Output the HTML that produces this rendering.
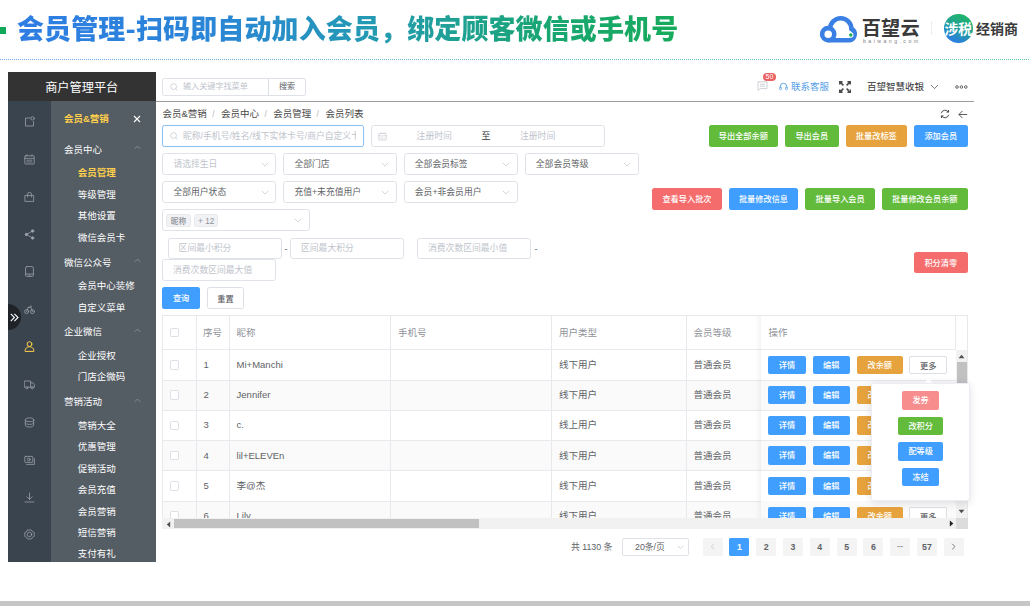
<!DOCTYPE html>
<html lang="zh-CN"><head><meta charset="utf-8"><title>会员管理</title>
<style>
html,body{margin:0;padding:0;}
body{width:1030px;height:606px;position:relative;overflow:hidden;background:#fff;font-family:"Liberation Sans","Noto Sans CJK SC",sans-serif;}
body div,body svg{position:absolute;}
.t{white-space:nowrap;}
.b{white-space:nowrap;text-align:center;overflow:hidden;font-weight:500;}
.inp{box-sizing:border-box;border:0.7px solid #dfe2e8;border-radius:2.7px;background:#fff;}
</style></head><body>

<div style="left:0.0px;top:27.0px;width:6.0px;height:7.4px;background:#12a85a;"></div>
<div class="t" style="left:17px;top:8px;line-height:40px;font-size:27px;font-weight:900;letter-spacing:0.12px;background:linear-gradient(90deg,#2e7de3 0%,#2b86d6 30%,#239bb0 55%,#19a672 80%,#17ab5c 100%);-webkit-background-clip:text;background-clip:text;color:transparent;font-family:'Noto Sans CJK SC',sans-serif;">会员管理-扫码即自动加入会员，绑定顾客微信或手机号</div>
<div style="left:0;top:58.8px;width:1030px;height:1px;opacity:.8;background:linear-gradient(90deg,#4a8fe0,#3fa6b8 55%,#35b880);-webkit-mask:repeating-linear-gradient(90deg,#000 0 1px,transparent 1px 2px);mask:repeating-linear-gradient(90deg,#000 0 1px,transparent 1px 2px);"></div>
<svg style="left:812.0px;top:8.0px;" width="50" height="40" viewBox="0 0 50 40" fill="none"><path d="M16.2 32.25 H37.6 A6.05 6.05 0 0 0 39.4 20.9 A10.65 10.65 0 0 0 18.1 20.9" stroke="#3a7fe4" stroke-width="4.6" stroke-linecap="round" fill="none"/><circle cx="16.2" cy="26.2" r="6.05" stroke="#3a7fe4" stroke-width="4.6" fill="#fff"/><circle cx="38.8" cy="27" r="2.7" fill="#fff"/><circle cx="38.8" cy="27" r="1.7" fill="#1aad5c"/></svg>
<div class="t" style="left:861.7px;top:15.4px;line-height:24px;font-size:19.2px;color:#3a3a3a;font-weight:700;font-family:'Noto Sans CJK SC',sans-serif;letter-spacing:0.2px;">百望云</div>
<div class="t" style="left:863.0px;top:37.1px;line-height:8px;font-size:5.2px;color:#808080;font-weight:400;letter-spacing:2.45px;">baiwang.com</div>
<div style="left:931.0px;top:21.0px;width:0.8px;height:14.0px;background:#ededed;"></div>
<div style="left:943.7px;top:14px;width:29px;height:29px;border-radius:50%;background:linear-gradient(205deg,#1fb568 12%,#22a294 45%,#2a7fe0 85%);"></div>
<div class="t" style="left:941.7px;width:33.0px;text-align:center;top:18.3px;line-height:20px;font-size:13.8px;color:#fff;font-weight:700;font-family:'Noto Sans CJK SC',sans-serif;letter-spacing:-0.2px;">涉税</div>
<div class="t" style="left:976.0px;top:18.3px;line-height:20px;font-size:14px;color:#3a3a3a;font-weight:700;font-family:'Noto Sans CJK SC',sans-serif;">经销商</div>
<div style="left:8.0px;top:72.0px;width:147.5px;height:29.4px;background:#333;"></div>
<div class="t" style="left:8.0px;width:147.5px;text-align:center;top:77.8px;line-height:20px;font-size:12.2px;color:#fff;font-weight:400;">商户管理平台</div>
<div style="left:8.0px;top:101.4px;width:43.0px;height:460.2px;background:#3a444e;"></div>
<div style="left:51.0px;top:101.4px;width:104.5px;height:460.2px;background:#545c64;"></div>
<div class="t" style="left:64.0px;top:109.2px;line-height:20px;font-size:9.5px;color:#ffd04b;font-weight:700;">会员&amp;营销</div>
<svg style="left:133.0px;top:115.4px;" width="8" height="8" viewBox="0 0 8 8" fill="none"><path d="M1 1 L7 7 M7 1 L1 7" stroke="#fff" stroke-width="1.1"/></svg>
<div class="t" style="left:64.0px;top:139.8px;line-height:20px;font-size:9.5px;color:#fff;font-weight:400;">会员中心</div>
<svg style="left:134.2px;top:145.4px;" width="7" height="5" viewBox="0 0 7 5" fill="none"><path d="M0.6 4 L3.5 1 L6.4 4" stroke="#8b939b" stroke-width="0.8"/></svg>
<div class="t" style="left:64.0px;top:252.6px;line-height:20px;font-size:9.5px;color:#fff;font-weight:400;">微信公众号</div>
<svg style="left:134.2px;top:258.2px;" width="7" height="5" viewBox="0 0 7 5" fill="none"><path d="M0.6 4 L3.5 1 L6.4 4" stroke="#8b939b" stroke-width="0.8"/></svg>
<div class="t" style="left:64.0px;top:322.2px;line-height:20px;font-size:9.5px;color:#fff;font-weight:400;">企业微信</div>
<svg style="left:134.2px;top:327.8px;" width="7" height="5" viewBox="0 0 7 5" fill="none"><path d="M0.6 4 L3.5 1 L6.4 4" stroke="#8b939b" stroke-width="0.8"/></svg>
<div class="t" style="left:64.0px;top:392.2px;line-height:20px;font-size:9.5px;color:#fff;font-weight:400;">营销活动</div>
<svg style="left:134.2px;top:397.8px;" width="7" height="5" viewBox="0 0 7 5" fill="none"><path d="M0.6 4 L3.5 1 L6.4 4" stroke="#8b939b" stroke-width="0.8"/></svg>
<div class="t" style="left:77.8px;top:163.4px;line-height:20px;font-size:9.5px;color:#ffd04b;font-weight:700;">会员管理</div>
<div class="t" style="left:77.8px;top:184.6px;line-height:20px;font-size:9.5px;color:#fff;font-weight:400;">等级管理</div>
<div class="t" style="left:77.8px;top:206.0px;line-height:20px;font-size:9.5px;color:#fff;font-weight:400;">其他设置</div>
<div class="t" style="left:77.8px;top:227.8px;line-height:20px;font-size:9.5px;color:#fff;font-weight:400;">微信会员卡</div>
<div class="t" style="left:77.8px;top:275.8px;line-height:20px;font-size:9.5px;color:#fff;font-weight:400;">会员中心装修</div>
<div class="t" style="left:77.8px;top:297.6px;line-height:20px;font-size:9.5px;color:#fff;font-weight:400;">自定义菜单</div>
<div class="t" style="left:77.8px;top:345.8px;line-height:20px;font-size:9.5px;color:#fff;font-weight:400;">企业授权</div>
<div class="t" style="left:77.8px;top:367.2px;line-height:20px;font-size:9.5px;color:#fff;font-weight:400;">门店企微码</div>
<div class="t" style="left:77.8px;top:415.6px;line-height:20px;font-size:9.5px;color:#fff;font-weight:400;">营销大全</div>
<div class="t" style="left:77.8px;top:437.2px;line-height:20px;font-size:9.5px;color:#fff;font-weight:400;">优惠管理</div>
<div class="t" style="left:77.8px;top:458.6px;line-height:20px;font-size:9.5px;color:#fff;font-weight:400;">促销活动</div>
<div class="t" style="left:77.8px;top:480.2px;line-height:20px;font-size:9.5px;color:#fff;font-weight:400;">会员充值</div>
<div class="t" style="left:77.8px;top:501.6px;line-height:20px;font-size:9.5px;color:#fff;font-weight:400;">会员营销</div>
<div class="t" style="left:77.8px;top:523.0px;line-height:20px;font-size:9.5px;color:#fff;font-weight:400;">短信营销</div>
<div class="t" style="left:77.8px;top:544.4px;line-height:20px;font-size:9.5px;color:#fff;font-weight:400;">支付有礼</div>
<svg style="left:24.1px;top:115.5px;" width="11" height="11" viewBox="0 0 11 11" fill="none"><g stroke="#9aa1a9" stroke-width="0.8" fill="none" stroke-linecap="round" stroke-linejoin="round"><path d="M6 2 H1.5 V10 H9.5 V5.6"/><circle cx="8.6" cy="2.4" r="1.7"/></g></svg>
<svg style="left:24.1px;top:153.5px;" width="11" height="11" viewBox="0 0 11 11" fill="none"><g stroke="#9aa1a9" stroke-width="0.8" fill="none" stroke-linecap="round" stroke-linejoin="round"><rect x="0.8" y="1.8" width="9.4" height="8.2" rx="0.8"/><path d="M0.8 4.4 H10.2 M3 0.8 V2.4 M8 0.8 V2.4 M2.8 6.2 H8.2 M2.8 8 H8.2" stroke-dasharray="1.1 0.9"/></g></svg>
<svg style="left:24.1px;top:191.5px;" width="11" height="11" viewBox="0 0 11 11" fill="none"><g stroke="#9aa1a9" stroke-width="0.8" fill="none" stroke-linecap="round" stroke-linejoin="round"><path d="M1.3 3.4 H9.7 V9.4 H1.3 Z M3.6 5 V2.2 a1.9 1.9 0 0 1 3.8 0 V5"/></g></svg>
<svg style="left:24.1px;top:228.9px;" width="11" height="11" viewBox="0 0 11 11" fill="none"><g stroke="#9aa1a9" stroke-width="0.8" fill="none" stroke-linecap="round" stroke-linejoin="round"><circle cx="8.6" cy="2" r="1.2" fill="#a7adb5"/><circle cx="2.4" cy="5.5" r="1.2" fill="#a7adb5"/><circle cx="8.6" cy="9" r="1.2" fill="#a7adb5"/><path d="M2.4 5.5 L8.6 2 M2.4 5.5 L8.6 9"/></g></svg>
<svg style="left:24.1px;top:266.1px;" width="11" height="11" viewBox="0 0 11 11" fill="none"><g stroke="#9aa1a9" stroke-width="0.8" fill="none" stroke-linecap="round" stroke-linejoin="round"><rect x="1.6" y="0.6" width="7.8" height="9.8" rx="1.2"/><path d="M1.6 8 H9.4"/><path d="M4.8 9.2 H6.2"/></g></svg>
<svg style="left:24.1px;top:304.1px;" width="11" height="11" viewBox="0 0 11 11" fill="none"><g stroke="#9aa1a9" stroke-width="0.8" fill="none" stroke-linecap="round" stroke-linejoin="round"><circle cx="2.6" cy="7.6" r="2"/><circle cx="8.4" cy="7.6" r="2"/><path d="M2.6 7.6 L4.4 3.4 H7 L8.4 7.6 M4 3.4 H5 M6.2 2.2 H7.6" /></g></svg>
<svg style="left:24.1px;top:341.1px;" width="11" height="11" viewBox="0 0 11 11" fill="none"><g stroke="#ffd04b" stroke-width="1.0" fill="none" stroke-linecap="round" stroke-linejoin="round"><circle cx="5.5" cy="3.1" r="2.4"/><path d="M1.1 10 V9.6 a4.4 3.9 0 0 1 8.8 0 V10 Z"/></g></svg>
<svg style="left:24.1px;top:378.9px;" width="11" height="11" viewBox="0 0 11 11" fill="none"><g stroke="#9aa1a9" stroke-width="0.8" fill="none" stroke-linecap="round" stroke-linejoin="round"><path d="M0.7 2 H6.6 V8.2 H0.7 Z M6.6 3.8 H9 L10.4 5.8 V8.2 H6.6"/><circle cx="2.8" cy="8.8" r="1.1" fill="#3a444e"/><circle cx="8.2" cy="8.8" r="1.1" fill="#3a444e"/></g></svg>
<svg style="left:24.1px;top:416.5px;" width="11" height="11" viewBox="0 0 11 11" fill="none"><g stroke="#9aa1a9" stroke-width="0.8" fill="none" stroke-linecap="round" stroke-linejoin="round"><ellipse cx="5.5" cy="2.8" rx="4.2" ry="1.9"/><path d="M1.3 2.8 V8.2 a4.2 1.9 0 0 0 8.4 0 V2.8 M1.3 5.5 a4.2 1.9 0 0 0 8.4 0"/></g></svg>
<svg style="left:24.1px;top:454.5px;" width="11" height="11" viewBox="0 0 11 11" fill="none"><g stroke="#9aa1a9" stroke-width="0.8" fill="none" stroke-linecap="round" stroke-linejoin="round"><rect x="0.8" y="1.4" width="8" height="6" rx="0.6"/><circle cx="4.8" cy="4.4" r="1.4"/><path d="M2.6 9.4 H10.4 V3.6"/></g></svg>
<svg style="left:24.1px;top:491.5px;" width="11" height="11" viewBox="0 0 11 11" fill="none"><g stroke="#9aa1a9" stroke-width="0.8" fill="none" stroke-linecap="round" stroke-linejoin="round"><path d="M5.5 1 V7.4 M2.8 4.8 L5.5 7.4 L8.2 4.8 M1 10 H10"/></g></svg>
<svg style="left:24.1px;top:529.1px;" width="11" height="11" viewBox="0 0 11 11" fill="none"><g stroke="#9aa1a9" stroke-width="0.8" fill="none" stroke-linecap="round" stroke-linejoin="round"><path d="M3.6 1 H7.4 L8.3 2.6 L10.2 3.6 V7.4 L8.3 8.4 L7.4 10 H3.6 L2.7 8.4 L0.8 7.4 V3.6 L2.7 2.6 Z"/><circle cx="5.5" cy="5.5" r="2.2"/></g></svg>
<div style="left:-5px;top:304px;width:26px;height:26px;border-radius:13px;background:#1f2226;"></div>
<div style="left:0.0px;top:300.0px;width:8.0px;height:34.0px;background:#fff;"></div>
<svg style="left:10.2px;top:312.6px;" width="9" height="9" viewBox="0 0 9 9" fill="none"><path d="M0.8 0.8 L4.4 4.5 L0.8 8.2 M4.4 0.8 L8 4.5 L4.4 8.2" stroke="#fff" stroke-width="1.1"/></svg>
<div style="left:155.5px;top:100.6px;width:818.5px;height:1.4px;background:#9c9c9c;"></div>
<div class="inp" style="left:162.4px;top:77.6px;width:144px;height:18.2px;border-radius:2.5px;"></div>
<div style="left:267.6px;top:77.6px;width:0.7px;height:18.2px;background:#dcdfe6;"></div>
<svg style="left:170.0px;top:82.6px;" width="8" height="8" viewBox="0 0 8 8" fill="none"><circle cx="3.6" cy="3.6" r="2.9" stroke="#c0c4cc" stroke-width="0.7"/><path d="M5.8 5.8 L7.4 7.4" stroke="#c0c4cc" stroke-width="0.7"/></svg>
<div class="t" style="left:183.0px;top:76.7px;line-height:20px;font-size:8.1px;color:#c0c4cc;font-weight:400;">输入关键字找菜单</div>
<div class="t" style="left:279.0px;top:76.7px;line-height:20px;font-size:8.1px;color:#606266;font-weight:400;">搜索</div>
<svg style="left:756.6px;top:81.4px;" width="11" height="10" viewBox="0 0 11 10" fill="none"><path d="M1 0.8 H10 V7.6 H3.4 L1 9.4 Z M3 3.2 H8 M3 5.2 H8" stroke="#c0c4cc" stroke-width="0.8" stroke-linejoin="round"/></svg>
<div class="b" style="left:762.8px;top:73.2px;width:13.4px;height:7.8px;line-height:7.8px;border-radius:3.9px;background:#ec6161;color:#fff;font-size:7px;">50</div>
<svg style="left:779.0px;top:82.0px;" width="9" height="9" viewBox="0 0 9 9" fill="none"><path d="M1.2 6 V4.6 a3.3 3.3 0 0 1 6.6 0 V6" stroke="#559ee6" stroke-width="0.9"/><rect x="0.7" y="5" width="1.8" height="2.8" rx="0.7" stroke="#559ee6" stroke-width="0.7"/><rect x="6.5" y="5" width="1.8" height="2.8" rx="0.7" stroke="#559ee6" stroke-width="0.7"/></svg>
<div class="t" style="left:791.0px;top:76.6px;line-height:20px;font-size:9.5px;color:#559ee6;font-weight:400;">联系客服</div>
<svg style="left:839.0px;top:80.6px;" width="12" height="12" viewBox="0 0 12 12" fill="none"><g stroke="#4a4a4a" stroke-width="1.5" fill="none"><path d="M0.7 3.6 V0.7 H3.6 M0.9 0.9 L4.4 4.4 M8.4 0.7 H11.3 V3.6 M11.1 0.9 L7.6 4.4 M0.7 8.4 V11.3 H3.6 M0.9 11.1 L4.4 7.6 M11.3 8.4 V11.3 H8.4 M11.1 11.1 L7.6 7.6"/></g></svg>
<div class="t" style="left:867.0px;top:76.6px;line-height:20px;font-size:9.5px;color:#333;font-weight:400;">百望智慧收银</div>
<svg style="left:929.6px;top:84.0px;" width="9" height="6" viewBox="0 0 9 6" fill="none"><path d="M1 1 L4.5 4.6 L8 1" stroke="#555" stroke-width="0.8"/></svg>
<svg style="left:954.6px;top:84.6px;" width="13" height="4" viewBox="0 0 13 4" fill="none"><g stroke="#444" stroke-width="0.8"><circle cx="2" cy="2" r="1.3"/><circle cx="6.4" cy="2" r="1.3"/><circle cx="10.8" cy="2" r="1.3"/></g></svg>
<div class="t" style="left:162.4px;top:103.6px;line-height:20px;font-size:9.5px;color:#484848;font-weight:400;">会员&amp;营销</div>
<div class="t" style="left:212.2px;top:103.6px;line-height:20px;font-size:8.5px;color:#b5b8be;font-weight:400;">/</div>
<div class="t" style="left:221.0px;top:103.6px;line-height:20px;font-size:9.5px;color:#484848;font-weight:400;">会员中心</div>
<div class="t" style="left:264.4px;top:103.6px;line-height:20px;font-size:8.5px;color:#b5b8be;font-weight:400;">/</div>
<div class="t" style="left:273.2px;top:103.6px;line-height:20px;font-size:9.5px;color:#484848;font-weight:400;">会员管理</div>
<div class="t" style="left:316.6px;top:103.6px;line-height:20px;font-size:8.5px;color:#b5b8be;font-weight:400;">/</div>
<div class="t" style="left:325.4px;top:103.6px;line-height:20px;font-size:9.5px;color:#484848;font-weight:400;">会员列表</div>
<svg style="left:940.0px;top:109.0px;" width="10" height="10" viewBox="0 0 10 10" fill="none"><g stroke="#333" stroke-width="0.9" fill="none"><path d="M1.3 4.2 A3.9 3.9 0 0 1 8.3 2.9 M8.7 5.8 A3.9 3.9 0 0 1 1.7 7.1"/><path d="M8.6 1 V3.1 H6.5 M1.4 9 V6.9 H3.5"/></g></svg>
<svg style="left:957.6px;top:109.6px;" width="10" height="9" viewBox="0 0 10 9" fill="none"><path d="M9.2 4.5 H1 M4.4 1 L0.9 4.5 L4.4 8" stroke="#333" stroke-width="0.8" fill="none"/></svg>
<div class="inp" style="left:162.4px;top:125.4px;width:201.2px;height:21.2px;border-color:#8cc0f6;box-shadow:0 0 1px rgba(64,158,255,.3);"></div>
<svg style="left:170.0px;top:131.8px;" width="8" height="8" viewBox="0 0 8 8" fill="none"><circle cx="3.6" cy="3.6" r="2.9" stroke="#c0c4cc" stroke-width="0.7"/><path d="M5.8 5.8 L7.4 7.4" stroke="#c0c4cc" stroke-width="0.7"/></svg>
<div class="t" style="left:183px;top:126px;width:172.5px;overflow:hidden;line-height:20px;font-size:8.8px;color:#c0c4cc;">昵称/手机号/姓名/线下实体卡号/商户自定义卡号</div>
<div class="inp" style="left:370.6px;top:125.4px;width:234px;height:21.2px;"></div>
<svg style="left:378.0px;top:131.6px;" width="9" height="9" viewBox="0 0 9 9" fill="none"><g stroke="#c0c4cc" stroke-width="0.7"><rect x="0.8" y="1.4" width="7.4" height="6.6" rx="0.6"/><path d="M0.8 3.6 H8.2 M2.8 0.6 V2 M6.2 0.6 V2 M2.6 5 H6.4 M2.6 6.4 H6.4" stroke-dasharray="1 0.7"/></g></svg>
<div class="t" style="left:416.6px;top:126.0px;line-height:20px;font-size:8.8px;color:#c0c4cc;font-weight:400;">注册时间</div>
<div class="t" style="left:481.6px;top:126.0px;line-height:20px;font-size:8.8px;color:#303133;font-weight:400;">至</div>
<div class="t" style="left:520.0px;top:126.0px;line-height:20px;font-size:8.8px;color:#c0c4cc;font-weight:400;">注册时间</div>
<div class="b" style="left:708.6px;top:125.4px;width:69.4px;height:21.2px;line-height:23.0px;background:#62bb3b;color:#fff;font-size:8.2px;border-radius:2.5px;">导出全部余额</div>
<div class="b" style="left:785.0px;top:125.4px;width:53.6px;height:21.2px;line-height:23.0px;background:#62bb3b;color:#fff;font-size:8.2px;border-radius:2.5px;">导出会员</div>
<div class="b" style="left:845.6px;top:125.4px;width:61.4px;height:21.2px;line-height:23.0px;background:#e6a23c;color:#fff;font-size:8.2px;border-radius:2.5px;">批量改标签</div>
<div class="b" style="left:914.0px;top:125.4px;width:53.6px;height:21.2px;line-height:23.0px;background:#409eff;color:#fff;font-size:8.2px;border-radius:2.5px;">添加会员</div>
<div class="inp" style="left:162.4px;top:153.4px;width:114.0px;height:21.2px;"></div>
<div class="t" style="left:173.4px;top:154.0px;line-height:20px;font-size:8.8px;color:#c0c4cc;font-weight:400;">请选择生日</div>
<svg style="left:260.8px;top:161.6px;" width="8" height="5" viewBox="0 0 8 5" fill="none"><path d="M0.8 0.8 L4 4 L7.2 0.8" stroke="#c0c4cc" stroke-width="0.7"/></svg>
<div class="inp" style="left:283.4px;top:153.4px;width:113.4px;height:21.2px;"></div>
<div class="t" style="left:294.4px;top:154.0px;line-height:20px;font-size:8.8px;color:#606266;font-weight:400;">全部门店</div>
<svg style="left:381.2px;top:161.6px;" width="8" height="5" viewBox="0 0 8 5" fill="none"><path d="M0.8 0.8 L4 4 L7.2 0.8" stroke="#c0c4cc" stroke-width="0.7"/></svg>
<div class="inp" style="left:404.4px;top:153.4px;width:113.4px;height:21.2px;"></div>
<div class="t" style="left:414.8px;top:154.0px;line-height:20px;font-size:8.8px;color:#606266;font-weight:400;">全部会员标签</div>
<svg style="left:502.2px;top:161.6px;" width="8" height="5" viewBox="0 0 8 5" fill="none"><path d="M0.8 0.8 L4 4 L7.2 0.8" stroke="#c0c4cc" stroke-width="0.7"/></svg>
<div class="inp" style="left:525.4px;top:153.4px;width:113.4px;height:21.2px;"></div>
<div class="t" style="left:535.8px;top:154.0px;line-height:20px;font-size:8.8px;color:#606266;font-weight:400;">全部会员等级</div>
<svg style="left:623.2px;top:161.6px;" width="8" height="5" viewBox="0 0 8 5" fill="none"><path d="M0.8 0.8 L4 4 L7.2 0.8" stroke="#c0c4cc" stroke-width="0.7"/></svg>
<div class="inp" style="left:162.4px;top:181.4px;width:114.0px;height:21.2px;"></div>
<div class="t" style="left:173.4px;top:182.0px;line-height:20px;font-size:8.8px;color:#606266;font-weight:400;">全部用户状态</div>
<svg style="left:260.8px;top:189.6px;" width="8" height="5" viewBox="0 0 8 5" fill="none"><path d="M0.8 0.8 L4 4 L7.2 0.8" stroke="#c0c4cc" stroke-width="0.7"/></svg>
<div class="inp" style="left:283.4px;top:181.4px;width:113.4px;height:21.2px;"></div>
<div class="t" style="left:294.4px;top:182.0px;line-height:20px;font-size:8.8px;color:#606266;font-weight:400;">充值+未充值用户</div>
<svg style="left:381.2px;top:189.6px;" width="8" height="5" viewBox="0 0 8 5" fill="none"><path d="M0.8 0.8 L4 4 L7.2 0.8" stroke="#c0c4cc" stroke-width="0.7"/></svg>
<div class="inp" style="left:404.4px;top:181.4px;width:113.4px;height:21.2px;"></div>
<div class="t" style="left:414.8px;top:182.0px;line-height:20px;font-size:8.8px;color:#606266;font-weight:400;">会员+非会员用户</div>
<svg style="left:502.2px;top:189.6px;" width="8" height="5" viewBox="0 0 8 5" fill="none"><path d="M0.8 0.8 L4 4 L7.2 0.8" stroke="#c0c4cc" stroke-width="0.7"/></svg>
<div class="b" style="left:652.0px;top:188.4px;width:70.0px;height:21.2px;line-height:23.0px;background:#f56c6c;color:#fff;font-size:8.2px;border-radius:2.5px;">查看导入批次</div>
<div class="b" style="left:728.6px;top:188.4px;width:69.8px;height:21.2px;line-height:23.0px;background:#409eff;color:#fff;font-size:8.2px;border-radius:2.5px;">批量修改信息</div>
<div class="b" style="left:805.4px;top:188.4px;width:69.6px;height:21.2px;line-height:23.0px;background:#62bb3b;color:#fff;font-size:8.2px;border-radius:2.5px;">批量导入会员</div>
<div class="b" style="left:882.0px;top:188.4px;width:85.6px;height:21.2px;line-height:23.0px;background:#62bb3b;color:#fff;font-size:8.2px;border-radius:2.5px;">批量修改会员余额</div>
<div class="inp" style="left:162.4px;top:209.4px;width:147.4px;height:21.2px;"></div>
<svg style="left:294.2px;top:217.6px;" width="8" height="5" viewBox="0 0 8 5" fill="none"><path d="M0.8 0.8 L4 4 L7.2 0.8" stroke="#c0c4cc" stroke-width="0.7"/></svg>
<div class="b" style="left:166.4px;top:213.6px;width:24.2px;height:13.2px;line-height:13.6px;background:#f0f2f5;color:#909399;font-size:7.8px;border-radius:2.5px;border:0.7px solid #e9e9eb;box-sizing:border-box;">昵称</div>
<div class="b" style="left:194.4px;top:213.6px;width:23.6px;height:13.2px;line-height:13.2px;background:#f0f2f5;color:#909399;font-size:8.2px;border-radius:2.5px;border:0.7px solid #e9e9eb;box-sizing:border-box;">+ 12</div>
<div class="inp" style="left:168px;top:237.8px;width:113.6px;height:20.8px;"></div>
<div class="t" style="left:178.6px;top:238.2px;line-height:20px;font-size:8.8px;color:#c0c4cc;font-weight:400;">区间最小积分</div>
<div class="t" style="left:284.6px;top:238.6px;line-height:20px;font-size:9.5px;color:#606266;font-weight:400;">-</div>
<div class="inp" style="left:290.4px;top:237.8px;width:113.2px;height:20.8px;"></div>
<div class="t" style="left:301.0px;top:238.2px;line-height:20px;font-size:8.8px;color:#c0c4cc;font-weight:400;">区间最大积分</div>
<div class="inp" style="left:417.4px;top:237.8px;width:113.4px;height:20.8px;"></div>
<div class="t" style="left:428.0px;top:238.2px;line-height:20px;font-size:8.8px;color:#c0c4cc;font-weight:400;">消费次数区间最小值</div>
<div class="t" style="left:534.4px;top:238.6px;line-height:20px;font-size:9.5px;color:#606266;font-weight:400;">-</div>
<div class="inp" style="left:162.4px;top:259.4px;width:114.0px;height:21.2px;"></div>
<div class="t" style="left:173.0px;top:260.0px;line-height:20px;font-size:8.8px;color:#c0c4cc;font-weight:400;">消费次数区间最大值</div>
<div class="b" style="left:914.0px;top:252.0px;width:53.6px;height:21.4px;line-height:23.2px;background:#f56c6c;color:#fff;font-size:8.2px;border-radius:2.5px;">积分清零</div>
<div class="b" style="left:162.4px;top:287.4px;width:37.4px;height:21.4px;line-height:23.2px;background:#409eff;color:#fff;font-size:8.2px;border-radius:2.5px;">查询</div>
<div class="b" style="left:206.6px;top:287.4px;width:37.6px;height:21.4px;line-height:23.2px;background:#fff;color:#606266;font-size:8.2px;border-radius:2.5px;border:0.7px solid #dcdfe6;box-sizing:border-box;">重置</div>
<div style="left:162.4px;top:315.4px;width:805.2px;height:203.0px;overflow:hidden;">
<div style="left:0.0px;top:64.8px;width:793.2px;height:30.2px;background:#fafafa;"></div>
<div style="left:0.0px;top:125.2px;width:793.2px;height:30.0px;background:#fafafa;"></div>
<div style="left:0.0px;top:185.6px;width:793.2px;height:30.2px;background:#fafafa;"></div>
<div style="left:0.0px;top:0.0px;width:805.2px;height:0.7px;background:#e8e9ec;"></div>
<div style="left:0.0px;top:0.0px;width:0.7px;height:244.6px;background:#e8e9ec;"></div>
<div style="left:804.5px;top:0.0px;width:0.7px;height:244.6px;background:#e8e9ec;"></div>
<div style="left:0.0px;top:33.9px;width:793.2px;height:0.7px;background:#e8e9ec;"></div>
<div style="left:0.0px;top:64.4px;width:793.2px;height:0.7px;background:#e8e9ec;"></div>
<div style="left:0.0px;top:94.6px;width:793.2px;height:0.7px;background:#e8e9ec;"></div>
<div style="left:0.0px;top:124.9px;width:793.2px;height:0.7px;background:#e8e9ec;"></div>
<div style="left:0.0px;top:154.9px;width:793.2px;height:0.7px;background:#e8e9ec;"></div>
<div style="left:0.0px;top:185.2px;width:793.2px;height:0.7px;background:#e8e9ec;"></div>
<div style="left:0.0px;top:215.5px;width:793.2px;height:0.7px;background:#e8e9ec;"></div>
<div style="left:33.7px;top:0.0px;width:0.7px;height:244.6px;background:#e8e9ec;"></div>
<div style="left:66.7px;top:0.0px;width:0.7px;height:244.6px;background:#e8e9ec;"></div>
<div style="left:227.6px;top:0.0px;width:0.7px;height:244.6px;background:#e8e9ec;"></div>
<div style="left:388.9px;top:0.0px;width:0.7px;height:244.6px;background:#e8e9ec;"></div>
<div style="left:523.9px;top:0.0px;width:0.7px;height:244.6px;background:#e8e9ec;"></div>
<div style="left:792.9px;top:0.0px;width:0.7px;height:34.2px;background:#e8e9ec;"></div>
<div class="t" style="left:40.6px;top:7.2px;line-height:20px;font-size:9.5px;color:#909399;font-weight:400;">序号</div>
<div class="t" style="left:74.2px;top:7.2px;line-height:20px;font-size:9.5px;color:#909399;font-weight:400;">昵称</div>
<div class="t" style="left:235.6px;top:7.2px;line-height:20px;font-size:9.5px;color:#909399;font-weight:400;">手机号</div>
<div class="t" style="left:396.6px;top:7.2px;line-height:20px;font-size:9.5px;color:#909399;font-weight:400;">用户类型</div>
<div class="t" style="left:531.0px;top:7.2px;line-height:20px;font-size:9.5px;color:#909399;font-weight:400;">会员等级</div>
<div style="left:7.2px;top:12.4px;width:9.6px;height:9.6px;box-sizing:border-box;border:0.7px solid #dcdfe6;border-radius:1.4px;background:#fff;"></div>
<div style="left:7.2px;top:44.7px;width:9.6px;height:9.6px;box-sizing:border-box;border:0.7px solid #dcdfe6;border-radius:1.4px;background:#fff;"></div>
<div class="t" style="left:41.2px;top:39.5px;line-height:20px;font-size:9.5px;color:#606266;font-weight:400;">1</div>
<div class="t" style="left:74.2px;top:39.5px;line-height:20px;font-size:9.5px;color:#606266;font-weight:400;">Mi+Manchi</div>
<div class="t" style="left:396.6px;top:39.5px;line-height:20px;font-size:9.5px;color:#606266;font-weight:400;">线下用户</div>
<div class="t" style="left:531.0px;top:39.5px;line-height:20px;font-size:9.5px;color:#606266;font-weight:400;">普通会员</div>
<div style="left:7.2px;top:75.1px;width:9.6px;height:9.6px;box-sizing:border-box;border:0.7px solid #dcdfe6;border-radius:1.4px;background:#fff;"></div>
<div class="t" style="left:41.2px;top:69.9px;line-height:20px;font-size:9.5px;color:#606266;font-weight:400;">2</div>
<div class="t" style="left:74.2px;top:69.9px;line-height:20px;font-size:9.5px;color:#606266;font-weight:400;">Jennifer</div>
<div class="t" style="left:396.6px;top:69.9px;line-height:20px;font-size:9.5px;color:#606266;font-weight:400;">线下用户</div>
<div class="t" style="left:531.0px;top:69.9px;line-height:20px;font-size:9.5px;color:#606266;font-weight:400;">普通会员</div>
<div style="left:7.2px;top:105.3px;width:9.6px;height:9.6px;box-sizing:border-box;border:0.7px solid #dcdfe6;border-radius:1.4px;background:#fff;"></div>
<div class="t" style="left:41.2px;top:100.1px;line-height:20px;font-size:9.5px;color:#606266;font-weight:400;">3</div>
<div class="t" style="left:74.2px;top:100.1px;line-height:20px;font-size:9.5px;color:#606266;font-weight:400;">c.</div>
<div class="t" style="left:396.6px;top:100.1px;line-height:20px;font-size:9.5px;color:#606266;font-weight:400;">线上用户</div>
<div class="t" style="left:531.0px;top:100.1px;line-height:20px;font-size:9.5px;color:#606266;font-weight:400;">普通会员</div>
<div style="left:7.2px;top:135.4px;width:9.6px;height:9.6px;box-sizing:border-box;border:0.7px solid #dcdfe6;border-radius:1.4px;background:#fff;"></div>
<div class="t" style="left:41.2px;top:130.2px;line-height:20px;font-size:9.5px;color:#606266;font-weight:400;">4</div>
<div class="t" style="left:74.2px;top:130.2px;line-height:20px;font-size:9.5px;color:#606266;font-weight:400;">lil+ELEVEn</div>
<div class="t" style="left:396.6px;top:130.2px;line-height:20px;font-size:9.5px;color:#606266;font-weight:400;">线下用户</div>
<div class="t" style="left:531.0px;top:130.2px;line-height:20px;font-size:9.5px;color:#606266;font-weight:400;">普通会员</div>
<div style="left:7.2px;top:165.6px;width:9.6px;height:9.6px;box-sizing:border-box;border:0.7px solid #dcdfe6;border-radius:1.4px;background:#fff;"></div>
<div class="t" style="left:41.2px;top:160.4px;line-height:20px;font-size:9.5px;color:#606266;font-weight:400;">5</div>
<div class="t" style="left:74.2px;top:160.4px;line-height:20px;font-size:9.5px;color:#606266;font-weight:400;">李@杰</div>
<div class="t" style="left:396.6px;top:160.4px;line-height:20px;font-size:9.5px;color:#606266;font-weight:400;">线下用户</div>
<div class="t" style="left:531.0px;top:160.4px;line-height:20px;font-size:9.5px;color:#606266;font-weight:400;">普通会员</div>
<div style="left:7.2px;top:195.9px;width:9.6px;height:9.6px;box-sizing:border-box;border:0.7px solid #dcdfe6;border-radius:1.4px;background:#fff;"></div>
<div class="t" style="left:41.2px;top:190.7px;line-height:20px;font-size:9.5px;color:#606266;font-weight:400;">6</div>
<div class="t" style="left:74.2px;top:190.7px;line-height:20px;font-size:9.5px;color:#606266;font-weight:400;">Lily</div>
<div class="t" style="left:396.6px;top:190.7px;line-height:20px;font-size:9.5px;color:#606266;font-weight:400;">线下用户</div>
<div class="t" style="left:531.0px;top:190.7px;line-height:20px;font-size:9.5px;color:#606266;font-weight:400;">普通会员</div>
<div style="left:593.0px;top:0.7px;width:6.0px;height:243.9px;background:linear-gradient(90deg,rgba(0,0,0,0),rgba(0,0,0,0.045));"></div>
<div style="left:599.0px;top:0.7px;width:193.9px;height:33.2px;background:#fff;"></div>
<div style="left:599.0px;top:34.6px;width:193.9px;height:29.9px;background:#fff;"></div>
<div style="left:599.0px;top:65.2px;width:193.9px;height:29.5px;background:#fafafa;"></div>
<div style="left:599.0px;top:95.4px;width:193.9px;height:29.5px;background:#fff;"></div>
<div style="left:599.0px;top:125.6px;width:193.9px;height:29.3px;background:#fafafa;"></div>
<div style="left:599.0px;top:155.6px;width:193.9px;height:29.7px;background:#fff;"></div>
<div style="left:599.0px;top:186.0px;width:193.9px;height:29.5px;background:#fafafa;"></div>
<div class="t" style="left:606.0px;top:7.2px;line-height:20px;font-size:9.5px;color:#909399;font-weight:400;">操作</div>
<div class="b" style="left:606.0px;top:40.3px;width:37.2px;height:18.4px;line-height:20.2px;background:#409eff;color:#fff;font-size:8.2px;border-radius:2px;">详情</div>
<div class="b" style="left:650.2px;top:40.3px;width:37.4px;height:18.4px;line-height:20.2px;background:#409eff;color:#fff;font-size:8.2px;border-radius:2px;">编辑</div>
<div class="b" style="left:694.6px;top:40.3px;width:45.6px;height:18.4px;line-height:20.2px;background:#e6a23c;color:#fff;font-size:8.2px;border-radius:2px;">改余额</div>
<div class="b" style="left:747.0px;top:40.3px;width:37.6px;height:18.4px;line-height:20.2px;background:#fff;color:#606266;font-size:8.2px;border-radius:2px;border:0.7px solid #dcdfe6;box-sizing:border-box;">更多</div>
<div class="b" style="left:606.0px;top:70.7px;width:37.2px;height:18.4px;line-height:20.2px;background:#409eff;color:#fff;font-size:8.2px;border-radius:2px;">详情</div>
<div class="b" style="left:650.2px;top:70.7px;width:37.4px;height:18.4px;line-height:20.2px;background:#409eff;color:#fff;font-size:8.2px;border-radius:2px;">编辑</div>
<div class="b" style="left:694.6px;top:70.7px;width:45.6px;height:18.4px;line-height:20.2px;background:#e6a23c;color:#fff;font-size:8.2px;border-radius:2px;">改余额</div>
<div class="b" style="left:747.0px;top:70.7px;width:37.6px;height:18.4px;line-height:20.2px;background:#fff;color:#606266;font-size:8.2px;border-radius:2px;border:0.7px solid #dcdfe6;box-sizing:border-box;">更多</div>
<div class="b" style="left:606.0px;top:100.9px;width:37.2px;height:18.4px;line-height:20.2px;background:#409eff;color:#fff;font-size:8.2px;border-radius:2px;">详情</div>
<div class="b" style="left:650.2px;top:100.9px;width:37.4px;height:18.4px;line-height:20.2px;background:#409eff;color:#fff;font-size:8.2px;border-radius:2px;">编辑</div>
<div class="b" style="left:694.6px;top:100.9px;width:45.6px;height:18.4px;line-height:20.2px;background:#e6a23c;color:#fff;font-size:8.2px;border-radius:2px;">改余额</div>
<div class="b" style="left:747.0px;top:100.9px;width:37.6px;height:18.4px;line-height:20.2px;background:#fff;color:#606266;font-size:8.2px;border-radius:2px;border:0.7px solid #dcdfe6;box-sizing:border-box;">更多</div>
<div class="b" style="left:606.0px;top:131.0px;width:37.2px;height:18.4px;line-height:20.2px;background:#409eff;color:#fff;font-size:8.2px;border-radius:2px;">详情</div>
<div class="b" style="left:650.2px;top:131.0px;width:37.4px;height:18.4px;line-height:20.2px;background:#409eff;color:#fff;font-size:8.2px;border-radius:2px;">编辑</div>
<div class="b" style="left:694.6px;top:131.0px;width:45.6px;height:18.4px;line-height:20.2px;background:#e6a23c;color:#fff;font-size:8.2px;border-radius:2px;">改余额</div>
<div class="b" style="left:747.0px;top:131.0px;width:37.6px;height:18.4px;line-height:20.2px;background:#fff;color:#606266;font-size:8.2px;border-radius:2px;border:0.7px solid #dcdfe6;box-sizing:border-box;">更多</div>
<div class="b" style="left:606.0px;top:161.2px;width:37.2px;height:18.4px;line-height:20.2px;background:#409eff;color:#fff;font-size:8.2px;border-radius:2px;">详情</div>
<div class="b" style="left:650.2px;top:161.2px;width:37.4px;height:18.4px;line-height:20.2px;background:#409eff;color:#fff;font-size:8.2px;border-radius:2px;">编辑</div>
<div class="b" style="left:694.6px;top:161.2px;width:45.6px;height:18.4px;line-height:20.2px;background:#e6a23c;color:#fff;font-size:8.2px;border-radius:2px;">改余额</div>
<div class="b" style="left:747.0px;top:161.2px;width:37.6px;height:18.4px;line-height:20.2px;background:#fff;color:#606266;font-size:8.2px;border-radius:2px;border:0.7px solid #dcdfe6;box-sizing:border-box;">更多</div>
<div class="b" style="left:606.0px;top:191.5px;width:37.2px;height:18.4px;line-height:20.2px;background:#409eff;color:#fff;font-size:8.2px;border-radius:2px;">详情</div>
<div class="b" style="left:650.2px;top:191.5px;width:37.4px;height:18.4px;line-height:20.2px;background:#409eff;color:#fff;font-size:8.2px;border-radius:2px;">编辑</div>
<div class="b" style="left:694.6px;top:191.5px;width:45.6px;height:18.4px;line-height:20.2px;background:#e6a23c;color:#fff;font-size:8.2px;border-radius:2px;">改余额</div>
<div class="b" style="left:747.0px;top:191.5px;width:37.6px;height:18.4px;line-height:20.2px;background:#fff;color:#606266;font-size:8.2px;border-radius:2px;border:0.7px solid #dcdfe6;box-sizing:border-box;">更多</div>
<div style="left:793.6px;top:34.2px;width:10.9px;height:170.4px;background:#f1f1f1;"></div>
<div style="left:794.6px;top:47.0px;width:10.0px;height:107.6px;background:#c1c1c1;"></div>
<svg style="left:796.0px;top:38.2px;" width="7" height="5" viewBox="0 0 7 5"><path d="M0.6 4.2 L3.5 0.8 L6.4 4.2 Z" fill="#505050"/></svg>
<svg style="left:796.0px;top:194.0px;" width="7" height="5" viewBox="0 0 7 5"><path d="M0.6 0.8 L3.5 4.2 L6.4 0.8 Z" fill="#505050"/></svg>
</div>
<div style="left:162.4px;top:518.4px;width:793.4px;height:10.6px;background:#f1f1f1;"></div>
<div style="left:955.8px;top:518.4px;width:11.8px;height:10.6px;background:#dcdcdc;"></div>
<div style="left:174.4px;top:519.4px;width:304.6px;height:8.8px;background:#c1c1c1;"></div>
<svg style="left:166.4px;top:520.6px;" width="5" height="7" viewBox="0 0 5 7" fill="none"><path d="M4.2 0.6 L0.8 3.5 L4.2 6.4 Z" fill="#505050"/></svg>
<svg style="left:948.6px;top:520.2px;" width="5" height="7" viewBox="0 0 5 7" fill="none"><path d="M0.8 0.4 L4.4 3.5 L0.8 6.6 Z" fill="#222"/></svg>
<div style="left:871px;top:382.6px;width:99px;height:118.4px;background:#fff;border-radius:2.6px;box-sizing:border-box;border:0.7px solid #ebeef5;box-shadow:0 1.4px 8px rgba(0,0,0,.12);"></div>
<svg style="left:924.4px;top:378.4px;" width="9" height="5" viewBox="0 0 9 5" fill="none"><path d="M0.4 4.8 L4.5 0.6 L8.6 4.8 Z" fill="#fff"/></svg>
<div class="b" style="left:902.0px;top:391.4px;width:37.2px;height:18.4px;line-height:20.2px;background:#f78d8d;color:#fff;font-size:8.2px;border-radius:2px;">发券</div>
<div class="b" style="left:898.0px;top:417.0px;width:45.4px;height:18.4px;line-height:20.2px;background:#62bb3b;color:#fff;font-size:8.2px;border-radius:2px;">改积分</div>
<div class="b" style="left:898.0px;top:442.4px;width:45.4px;height:18.4px;line-height:20.2px;background:#409eff;color:#fff;font-size:8.2px;border-radius:2px;">配等级</div>
<div class="b" style="left:902.0px;top:468.0px;width:37.2px;height:18.4px;line-height:20.2px;background:#409eff;color:#fff;font-size:8.2px;border-radius:2px;">冻结</div>
<div class="t" style="left:571.0px;top:537.0px;line-height:20px;font-size:8.8px;color:#606266;font-weight:400;">共 1130 条</div>
<div class="inp" style="left:622.4px;top:537.6px;width:66.2px;height:18.6px;border-radius:2px;"></div>
<div class="t" style="left:635.0px;top:537.0px;line-height:20px;font-size:8.8px;color:#606266;font-weight:400;">20条/页</div>
<svg style="left:677.4px;top:544.8px;" width="7" height="5" viewBox="0 0 7 5" fill="none"><path d="M0.8 0.8 L3.5 3.6 L6.2 0.8" stroke="#c0c4cc" stroke-width="0.7"/></svg>
<div style="left:702.6px;top:537.6px;width:20.0px;height:18.4px;background:#f4f4f5;border-radius:1.4px;"></div>
<svg style="left:710.0px;top:543.2px;" width="5.2" height="7.2" viewBox="0 0 5.2 7.2" fill="none"><path d="M4 0.8 L1.2 3.6 L4 6.4" stroke="#c0c4cc" stroke-width="0.8"/></svg>
<div class="b" style="left:729.4px;top:537.6px;width:20.0px;height:18.4px;line-height:18.4px;background:#409eff;color:#fff;font-size:8.8px;border-radius:1.4px;font-weight:700;">1</div>
<div class="b" style="left:756.2px;top:537.6px;width:20.0px;height:18.4px;line-height:18.4px;background:#f4f4f5;color:#606266;font-size:8.8px;border-radius:1.4px;font-weight:700;">2</div>
<div class="b" style="left:783.0px;top:537.6px;width:20.0px;height:18.4px;line-height:18.4px;background:#f4f4f5;color:#606266;font-size:8.8px;border-radius:1.4px;font-weight:700;">3</div>
<div class="b" style="left:809.8px;top:537.6px;width:20.0px;height:18.4px;line-height:18.4px;background:#f4f4f5;color:#606266;font-size:8.8px;border-radius:1.4px;font-weight:700;">4</div>
<div class="b" style="left:836.6px;top:537.6px;width:20.0px;height:18.4px;line-height:18.4px;background:#f4f4f5;color:#606266;font-size:8.8px;border-radius:1.4px;font-weight:700;">5</div>
<div class="b" style="left:863.4px;top:537.6px;width:20.0px;height:18.4px;line-height:18.4px;background:#f4f4f5;color:#606266;font-size:8.8px;border-radius:1.4px;font-weight:700;">6</div>
<div class="b" style="left:890.2px;top:537.6px;width:20.0px;height:18.4px;line-height:18.4px;background:#f4f4f5;color:#606266;font-size:4.4px;border-radius:1.4px;font-weight:700;letter-spacing:0.5px;">•••</div>
<div class="b" style="left:917.0px;top:537.6px;width:20.0px;height:18.4px;line-height:18.4px;background:#f4f4f5;color:#606266;font-size:8.8px;border-radius:1.4px;font-weight:700;">57</div>
<div style="left:943.8px;top:537.6px;width:20.0px;height:18.4px;background:#f4f4f5;border-radius:1.4px;"></div>
<svg style="left:951.2px;top:543.2px;" width="5.2" height="7.2" viewBox="0 0 5.2 7.2" fill="none"><path d="M1.2 0.8 L4 3.6 L1.2 6.4" stroke="#606266" stroke-width="0.8"/></svg>
<div style="left:0.0px;top:600.6px;width:1030.0px;height:5.4px;background:#c6c6c6;"></div>
</body></html>
